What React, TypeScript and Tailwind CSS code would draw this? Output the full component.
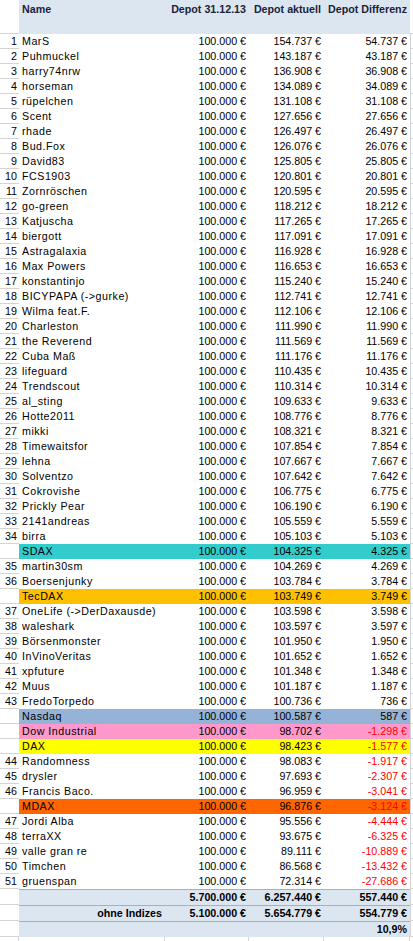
import React from "react";

type Row = { n?: number; name: string; a: string; d: string; bg?: string };

const rows: Row[] = [
  { n: 1, name: "MarS", a: "154.737 €", d: "54.737 €" },
  { n: 2, name: "Puhmuckel", a: "143.187 €", d: "43.187 €" },
  { n: 3, name: "harry74nrw", a: "136.908 €", d: "36.908 €" },
  { n: 4, name: "horseman", a: "134.089 €", d: "34.089 €" },
  { n: 5, name: "rüpelchen", a: "131.108 €", d: "31.108 €" },
  { n: 6, name: "Scent", a: "127.656 €", d: "27.656 €" },
  { n: 7, name: "rhade", a: "126.497 €", d: "26.497 €" },
  { n: 8, name: "Bud.Fox", a: "126.076 €", d: "26.076 €" },
  { n: 9, name: "David83", a: "125.805 €", d: "25.805 €" },
  { n: 10, name: "FCS1903", a: "120.801 €", d: "20.801 €" },
  { n: 11, name: "Zornröschen", a: "120.595 €", d: "20.595 €" },
  { n: 12, name: "go-green", a: "118.212 €", d: "18.212 €" },
  { n: 13, name: "Katjuscha", a: "117.265 €", d: "17.265 €" },
  { n: 14, name: "biergott", a: "117.091 €", d: "17.091 €" },
  { n: 15, name: "Astragalaxia", a: "116.928 €", d: "16.928 €" },
  { n: 16, name: "Max Powers", a: "116.653 €", d: "16.653 €" },
  { n: 17, name: "konstantinjo", a: "115.240 €", d: "15.240 €" },
  { n: 18, name: "BICYPAPA (->gurke)", a: "112.741 €", d: "12.741 €" },
  { n: 19, name: "Wilma feat.F.", a: "112.106 €", d: "12.106 €" },
  { n: 20, name: "Charleston", a: "111.990 €", d: "11.990 €" },
  { n: 21, name: "the Reverend", a: "111.569 €", d: "11.569 €" },
  { n: 22, name: "Cuba Maß", a: "111.176 €", d: "11.176 €" },
  { n: 23, name: "lifeguard", a: "110.435 €", d: "10.435 €" },
  { n: 24, name: "Trendscout", a: "110.314 €", d: "10.314 €" },
  { n: 25, name: "al_sting", a: "109.633 €", d: "9.633 €" },
  { n: 26, name: "Hotte2011", a: "108.776 €", d: "8.776 €" },
  { n: 27, name: "mikki", a: "108.321 €", d: "8.321 €" },
  { n: 28, name: "Timewaitsfor", a: "107.854 €", d: "7.854 €" },
  { n: 29, name: "lehna", a: "107.667 €", d: "7.667 €" },
  { n: 30, name: "Solventzo", a: "107.642 €", d: "7.642 €" },
  { n: 31, name: "Cokrovishe", a: "106.775 €", d: "6.775 €" },
  { n: 32, name: "Prickly Pear", a: "106.190 €", d: "6.190 €" },
  { n: 33, name: "2141andreas", a: "105.559 €", d: "5.559 €" },
  { n: 34, name: "birra", a: "105.103 €", d: "5.103 €" },
  { name: "SDAX", a: "104.325 €", d: "4.325 €", bg: "bg-[#33cccc]" },
  { n: 35, name: "martin30sm", a: "104.269 €", d: "4.269 €" },
  { n: 36, name: "Boersenjunky", a: "103.784 €", d: "3.784 €" },
  { name: "TecDAX", a: "103.749 €", d: "3.749 €", bg: "bg-[#ffc000]" },
  { n: 37, name: "OneLife (->DerDaxausde)", a: "103.598 €", d: "3.598 €" },
  { n: 38, name: "waleshark", a: "103.597 €", d: "3.597 €" },
  { n: 39, name: "Börsenmonster", a: "101.950 €", d: "1.950 €" },
  { n: 40, name: "InVinoVeritas", a: "101.652 €", d: "1.652 €" },
  { n: 41, name: "xpfuture", a: "101.348 €", d: "1.348 €" },
  { n: 42, name: "Muus", a: "101.187 €", d: "1.187 €" },
  { n: 43, name: "FredoTorpedo", a: "100.736 €", d: "736 €" },
  { name: "Nasdaq", a: "100.587 €", d: "587 €", bg: "bg-[#95b3d7]" },
  { name: "Dow Industrial", a: "98.702 €", d: "-1.298 €", bg: "bg-[#ff99cc]" },
  { name: "DAX", a: "98.423 €", d: "-1.577 €", bg: "bg-[#ffff00]" },
  { n: 44, name: "Randomness", a: "98.083 €", d: "-1.917 €" },
  { n: 45, name: "drysler", a: "97.693 €", d: "-2.307 €" },
  { n: 46, name: "Francis Baco.", a: "96.959 €", d: "-3.041 €" },
  { name: "MDAX", a: "96.876 €", d: "-3.124 €", bg: "bg-[#ff6600]" },
  { n: 47, name: "Jordi Alba", a: "95.556 €", d: "-4.444 €" },
  { n: 48, name: "terraXX", a: "93.675 €", d: "-6.325 €" },
  { n: 49, name: "valle gran re", a: "89.111 €", d: "-10.889 €" },
  { n: 50, name: "Timchen", a: "86.568 €", d: "-13.432 €" },
  { n: 51, name: "gruenspan", a: "72.314 €", d: "-27.686 €" },
];

function DataRow({ r }: { r: Row }) {
  const neg = r.d.startsWith("-");
  return (
    <div className="flex h-[15px] leading-[15px]">
      <div className="w-[19px] shrink-0 border-b border-[#d4d4d4] pr-[2px] text-right">
        {r.n ?? ""}
      </div>
      <div className={`flex w-[391px] shrink-0 ${r.bg ?? "bg-white"}`}>
        <div className="w-[146px] shrink-0 whitespace-nowrap pl-[3px] tracking-[0.5px]">{r.name}</div>
        <div className="w-[84px] shrink-0 whitespace-nowrap pr-[3px] text-right">100.000 €</div>
        <div className="w-[75px] shrink-0 whitespace-nowrap pr-[3px] text-right">{r.a}</div>
        <div className={`w-[86px] shrink-0 whitespace-nowrap pr-[3px] text-right ${neg ? "text-[#ff0000]" : ""}`}>
          {r.d}
        </div>
      </div>
      <div className="flex-1 border-b border-l border-[#d4d4d4]" />
    </div>
  );
}

function TotalRow({ label, a, b, c, last }: { label?: string; a?: string; b?: string; c: string; last?: boolean }) {
  return (
    <div className="flex h-[16px] leading-[15px]">
      <div className="w-[19px] shrink-0 border-b border-[#d4d4d4]" />
      <div className={`flex w-[391px] shrink-0 border-t border-[#95b3d7] bg-[#dce6f1] font-bold ${last ? "" : ""}`}>
        <div className="w-[146px] shrink-0 whitespace-nowrap pr-[3px] text-right">{label ?? ""}</div>
        <div className="w-[84px] shrink-0 whitespace-nowrap pr-[3px] text-right">{a ?? ""}</div>
        <div className="w-[75px] shrink-0 whitespace-nowrap pr-[3px] text-right">{b ?? ""}</div>
        <div className="w-[86px] shrink-0 whitespace-nowrap pr-[3px] text-right">{c}</div>
      </div>
      <div className="flex-1 border-b border-l border-[#d4d4d4]" />
    </div>
  );
}

export default function App() {
  return (
    <div
      className="h-[941px] w-[413px] overflow-hidden bg-white text-[10.7px] text-black"
      style={{ fontFamily: '"Liberation Sans", Arial, sans-serif' }}
    >
      {/* header */}
      <div className="flex h-[34px]">
        <div className="w-[19px] shrink-0 border-b border-[#d4d4d4]" />
        <div className="flex w-[391px] shrink-0 bg-[#dce6f1] pt-[2px] font-bold leading-[15px] text-[#1a2338]">
          <div className="w-[146px] shrink-0 pl-[3px]">Name</div>
          <div className="w-[84px] shrink-0 whitespace-nowrap pr-[3px] text-right">Depot 31.12.13</div>
          <div className="w-[75px] shrink-0 whitespace-nowrap pr-[3px] text-right">Depot aktuell</div>
          <div className="w-[86px] shrink-0 whitespace-nowrap pr-[3px] text-right">Depot Differenz</div>
        </div>
        <div className="flex-1 border-b border-[#d4d4d4]" />
      </div>
      {rows.map((r, i) => (
        <DataRow key={i} r={r} />
      ))}
      <TotalRow a="5.700.000 €" b="6.257.440 €" c="557.440 €" />
      <TotalRow label="ohne Indizes" a="5.100.000 €" b="5.654.779 €" c="554.779 €" />
      <div className="flex h-[16px] leading-[15px]">
        <div className="w-[19px] shrink-0 border-b border-[#d4d4d4]" />
        <div className="flex w-[391px] shrink-0 border-t border-[#95b3d7] bg-[#dce6f1] font-bold">
          <div className="w-[146px] shrink-0" />
          <div className="w-[84px] shrink-0" />
          <div className="w-[75px] shrink-0" />
          <div className="w-[86px] shrink-0 pr-[3px] text-right">10,9%</div>
        </div>
        <div className="flex-1 border-b border-l border-[#d4d4d4]" />
      </div>
      <div className="flex h-[15px]">
        <div className="w-[19px] shrink-0 border-r border-[#d4d4d4]" />
        <div className="w-[146px] shrink-0 border-r border-[#d4d4d4]" />
        <div className="w-[84px] shrink-0 border-r border-[#d4d4d4]" />
        <div className="w-[75px] shrink-0 border-r border-[#d4d4d4]" />
        <div className="w-[86px] shrink-0 border-r border-[#d4d4d4]" />
        <div className="flex-1" />
      </div>
    </div>
  );
}
